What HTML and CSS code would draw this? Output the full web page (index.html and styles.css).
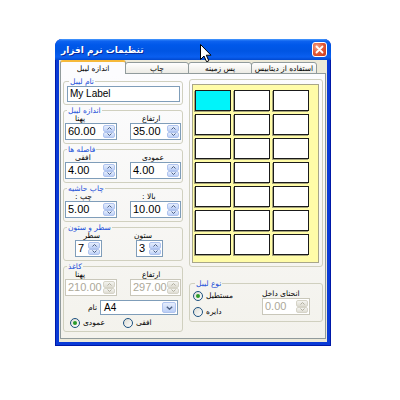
FILE: index.html
```html
<!DOCTYPE html>
<html>
<head>
<meta charset="utf-8">
<link rel="stylesheet" href="styles.css">
</head>
<body>
<div class="window">
  <div class="titlebar">
    <span class="title">تنظیمات نرم افزار</span>
    <span class="close"><svg width="9" height="9" viewBox="0 0 9 9"><path d="M1.5 1.5 L7.5 7.5 M7.5 1.5 L1.5 7.5" stroke="#fff" stroke-width="1.8" stroke-linecap="round"/></svg></span>
  </div>
  <div class="body">
    <div class="tabs">
      <div class="tab active t1">اندازه لیبل</div>
      <div class="tab t2">چاپ</div>
      <div class="tab t3">پس زمینه</div>
      <div class="tab t4">استفاده از دیتابیس</div>
    </div>
    <div class="panel">
      <div class="left">
        <fieldset class="g g1">
          <legend>نام لیبل</legend>
          <div class="textbox">My Label</div>
        </fieldset>
        <fieldset class="g">
          <legend>اندازه لیبل</legend>
          <div class="pair">
            <div class="field fl"><span class="lbl">پهنا</span><div class="spin w52"><span class="val">60.00</span><span class="btns"><i><svg viewBox="0 0 5 3"><path d="M0.5 2.5 L2.5 0.5 L4.5 2.5"/></svg></i><i><svg viewBox="0 0 5 3"><path d="M0.5 0.5 L2.5 2.5 L4.5 0.5"/></svg></i></span></div></div>
            <div class="field fr"><span class="lbl">ارتفاع</span><div class="spin w51"><span class="val">35.00</span><span class="btns"><i><svg viewBox="0 0 5 3"><path d="M0.5 2.5 L2.5 0.5 L4.5 2.5"/></svg></i><i><svg viewBox="0 0 5 3"><path d="M0.5 0.5 L2.5 2.5 L4.5 0.5"/></svg></i></span></div></div>
          </div>
        </fieldset>
        <fieldset class="g">
          <legend>فاصله ها</legend>
          <div class="pair">
            <div class="field fl"><span class="lbl">افقی</span><div class="spin w52"><span class="val">4.00</span><span class="btns"><i><svg viewBox="0 0 5 3"><path d="M0.5 2.5 L2.5 0.5 L4.5 2.5"/></svg></i><i><svg viewBox="0 0 5 3"><path d="M0.5 0.5 L2.5 2.5 L4.5 0.5"/></svg></i></span></div></div>
            <div class="field fr"><span class="lbl">عمودی</span><div class="spin w51"><span class="val">4.00</span><span class="btns"><i><svg viewBox="0 0 5 3"><path d="M0.5 2.5 L2.5 0.5 L4.5 2.5"/></svg></i><i><svg viewBox="0 0 5 3"><path d="M0.5 0.5 L2.5 2.5 L4.5 0.5"/></svg></i></span></div></div>
          </div>
        </fieldset>
        <fieldset class="g">
          <legend>چاپ حاشیه</legend>
          <div class="pair">
            <div class="field fl"><span class="lbl"><span dir="rtl">چپ :</span></span><div class="spin w52"><span class="val">5.00</span><span class="btns"><i><svg viewBox="0 0 5 3"><path d="M0.5 2.5 L2.5 0.5 L4.5 2.5"/></svg></i><i><svg viewBox="0 0 5 3"><path d="M0.5 0.5 L2.5 2.5 L4.5 0.5"/></svg></i></span></div></div>
            <div class="field fr"><span class="lbl"><span dir="rtl">بالا :</span></span><div class="spin w51"><span class="val">10.00</span><span class="btns"><i><svg viewBox="0 0 5 3"><path d="M0.5 2.5 L2.5 0.5 L4.5 2.5"/></svg></i><i><svg viewBox="0 0 5 3"><path d="M0.5 0.5 L2.5 2.5 L4.5 0.5"/></svg></i></span></div></div>
          </div>
        </fieldset>
        <fieldset class="g">
          <legend>سطر و ستون</legend>
          <div class="pair small">
            <div class="field sl"><span class="lbl">سطر</span><div class="spin w27"><span class="val">7</span><span class="btns"><i><svg viewBox="0 0 5 3"><path d="M0.5 2.5 L2.5 0.5 L4.5 2.5"/></svg></i><i><svg viewBox="0 0 5 3"><path d="M0.5 0.5 L2.5 2.5 L4.5 0.5"/></svg></i></span></div></div>
            <div class="field sr"><span class="lbl">ستون</span><div class="spin w27"><span class="val">3</span><span class="btns"><i><svg viewBox="0 0 5 3"><path d="M0.5 2.5 L2.5 0.5 L4.5 2.5"/></svg></i><i><svg viewBox="0 0 5 3"><path d="M0.5 0.5 L2.5 2.5 L4.5 0.5"/></svg></i></span></div></div>
          </div>
        </fieldset>
        <fieldset class="g g6">
          <legend>کاغذ</legend>
          <div class="pair">
            <div class="field fl"><span class="lbl">پهنا</span><div class="spin w52 dis"><span class="val">210.00</span><span class="btns"><i><svg viewBox="0 0 5 3"><path d="M0.5 2.5 L2.5 0.5 L4.5 2.5"/></svg></i><i><svg viewBox="0 0 5 3"><path d="M0.5 0.5 L2.5 2.5 L4.5 0.5"/></svg></i></span></div></div>
            <div class="field fr"><span class="lbl">ارتفاع</span><div class="spin w51 dis"><span class="val">297.00</span><span class="btns"><i><svg viewBox="0 0 5 3"><path d="M0.5 2.5 L2.5 0.5 L4.5 2.5"/></svg></i><i><svg viewBox="0 0 5 3"><path d="M0.5 0.5 L2.5 2.5 L4.5 0.5"/></svg></i></span></div></div>
          </div>
          <div class="comborow">
            <span class="clbl">نام</span>
            <div class="combo"><span class="val">A4</span><span class="drop"><svg viewBox="0 0 7 4"><path d="M0.8 0.8 L3.5 3.2 L6.2 0.8"/></svg></span></div>
          </div>
          <div class="radiorow">
            <span class="radio on"><i></i>عمودی</span>
            <span class="radio"><i></i>افقی</span>
          </div>
        </fieldset>
      </div>
      <div class="right">
        <div class="preview">
          <div class="yellow">
            <div class="grid">
              <div class="cell sel"></div><div class="cell"></div><div class="cell"></div>
              <div class="cell"></div><div class="cell"></div><div class="cell"></div>
              <div class="cell"></div><div class="cell"></div><div class="cell"></div>
              <div class="cell"></div><div class="cell"></div><div class="cell"></div>
              <div class="cell"></div><div class="cell"></div><div class="cell"></div>
              <div class="cell"></div><div class="cell"></div><div class="cell"></div>
              <div class="cell"></div><div class="cell"></div><div class="cell"></div>
            </div>
          </div>
        </div>
        <fieldset class="g shape">
          <legend>نوع لیبل</legend>
          <div class="shaperow">
            <div class="radios">
              <span class="radio on"><i></i>مستطیل</span>
              <span class="radio"><i></i>دایره</span>
            </div>
            <div class="field curve"><span class="lbl">انحنای داخل</span><div class="spin w48 dis"><span class="val">0.00</span><span class="btns"><i><svg viewBox="0 0 5 3"><path d="M0.5 2.5 L2.5 0.5 L4.5 2.5"/></svg></i><i><svg viewBox="0 0 5 3"><path d="M0.5 0.5 L2.5 2.5 L4.5 0.5"/></svg></i></span></div></div>
          </div>
        </fieldset>
      </div>
    </div>
  </div>
  <svg class="cursor" width="12" height="19" viewBox="0 0 12 19"><path d="M0.5 0.5 L0.5 15.5 L4 12 L6.6 17.8 L8.8 16.8 L6.3 11.2 L11 11.2 Z" fill="#fff" stroke="#000" stroke-width="1" stroke-linejoin="miter"/></svg>
</div>
</body>
</html>
```

FILE: styles.css
```css
* { box-sizing: border-box; }
body {
  margin: 0;
  background: #fff;
  font-family: "Liberation Sans", "DejaVu Sans", sans-serif;
  font-size: 9px;
  color: #000;
}
.window {
  position: relative;
  width: 276px;
  margin: 39px 0 0 55px;
  background: #0a3bd6;
  border: 1px solid #0019a8;
  border-top: none;
  border-radius: 7px 7px 0 0;
  padding: 0 3px 3px;
}
.titlebar {
  height: 21px;
  margin: 0 -4px;
  border-radius: 7px 7px 0 0;
  background: linear-gradient(to bottom, #4a9cff 0, #0e63f0 2px, #0058ea 6px, #0055e3 12px, #0a5ff0 18px, #0048d0 21px);
  display: flex;
  align-items: center;
  justify-content: space-between;
  padding: 0 4px 0 6px;
}
.title {
  color: #fff;
  font-family: "DejaVu Sans", sans-serif;
  font-weight: bold;
  font-size: 9px;
  text-shadow: 1px 1px 0 #0a2a9a;
}
.close {
  width: 15px;
  height: 15px;
  border: 1px solid #fff;
  border-radius: 3px;
  background: radial-gradient(circle at 30% 30%, #f4a690 0, #e45b38 45%, #c8391a 100%);
  display: flex;
  align-items: center;
  justify-content: center;
}
.close svg { display: block; }
.body {
  background: #ece9d8;
  height: 282px;
  padding: 0 1px 3px 1px;
}
.tabs {
  display: flex;
  align-items: flex-end;
  height: 14px;
  position: relative;
  z-index: 1;
}
.tab {
  height: 12px;
  border: 1px solid #919b9c;
  border-radius: 3px 3px 0 0;
  background: linear-gradient(#ffffff, #ecebe5);
  font-family: "DejaVu Sans", sans-serif;
  font-size: 7.5px;
  display: flex;
  align-items: center;
  justify-content: center;
  margin-left: -1px;
  white-space: nowrap;
}
.tab.active {
  height: 14px;
  background: #fcfcfe;
  border-bottom: none;
  border-top: 2px solid #f6b93a;
  margin-left: 0;
}
.t1 { width: 66px; }
.t2 { width: 64px; }
.t3 { width: 64px; }
.t4 { width: 66px; }
.panel {
  height: 266px;
  margin-top: -1px;
  border: 1px solid #919b9c;
  background: linear-gradient(#fcfcfe, #f3f2ec);
  display: flex;
  gap: 6px;
  padding: 3px 2px 0 2px;
}
.left {
  width: 120px;
  display: flex;
  flex-direction: column;
  gap: 1px;
}
.g {
  margin: 0;
  padding: 0 1px 3px 1px;
  border: 1px solid #d0d0bf;
  border-radius: 3px;
  min-width: 0;
  height: 38px;
}
.g legend {
  padding: 0 1px;
  margin-left: 2px;
  font-family: "DejaVu Sans", sans-serif;
  font-size: 7.5px;
  line-height: 9px;
  height: 9px;
  color: #1a4fd8;
}
.g1 { height: 28px; padding: 0 2px 2px 3px; }
.g6 { height: 70px; }
.textbox {
  height: 16px;
  border: 1px solid #7f9db9;
  background: #fff;
  font-size: 10px;
  line-height: 14px;
  padding-left: 2px;
}
.pair {
  display: flex;
  justify-content: space-between;
}
.field {
  display: flex;
  flex-direction: column;
}
.lbl {
  height: 8px;
  line-height: 8px;
  font-family: "DejaVu Sans", sans-serif;
  font-size: 7.5px;
  white-space: nowrap;
}
.fl .lbl { padding-left: 10px; }
.fr .lbl { padding-left: 12px; }
.small { padding: 0 18px 0 10px; }
.sl .lbl { text-align: right; padding-right: 2px; }
.sr .lbl { text-align: left; margin-left: -2px; }
.spin {
  height: 17px;
  border: 1px solid #7f9db9;
  background: #fff;
  display: flex;
  align-items: stretch;
}
.w52 { width: 52px; }
.w51 { width: 51px; }
.w48 { width: 48px; }
.w27 { width: 27px; }
.spin .val {
  flex: 1;
  font-size: 11px;
  line-height: 15px;
  padding-left: 2px;
  overflow: hidden;
}
.btns {
  width: 13px;
  display: flex;
  flex-direction: column;
  padding: 1px 1px 1px 0;
}
.btns i {
  flex: 1;
  display: flex;
  align-items: center;
  justify-content: center;
  background: linear-gradient(#e6eefc, #bccff7);
  border: 1px solid #b0c4ef;
  border-radius: 2px;
}
.btns svg {
  width: 5px;
  height: 3px;
  display: block;
}
.btns svg path {
  fill: none;
  stroke: #4d6185;
  stroke-width: 1;
}
.dis { border-color: #c9c7ba; }
.dis .val { color: #aca899; }
.dis .btns i { background: linear-gradient(#f4f4f0, #dedcd2); border-color: #d6d4c8; }
.dis .btns svg path { stroke: #b0ae9f; }
.comborow {
  display: flex;
  justify-content: flex-end;
  align-items: center;
  gap: 3px;
  margin-top: 4px;
  padding-right: 3px;
  height: 15px;
}
.clbl {
  font-family: "DejaVu Sans", sans-serif;
  font-size: 7.5px;
}
.combo {
  width: 78px;
  height: 15px;
  border: 1px solid #7f9db9;
  background: #fff;
  display: flex;
}
.combo .val {
  flex: 1;
  font-size: 10px;
  line-height: 13px;
  padding-left: 3px;
}
.drop {
  width: 14px;
  margin: 1px;
  border: 1px solid #b0c4ef;
  border-radius: 2px;
  background: linear-gradient(#e6eefc, #bccff7);
  display: flex;
  align-items: center;
  justify-content: center;
}
.drop svg { width: 7px; height: 4px; display: block; }
.drop svg path { fill: none; stroke: #4d6185; stroke-width: 1.4; }
.radiorow {
  display: flex;
  gap: 18px;
  padding-left: 5px;
  margin-top: 2px;
}
.radio {
  display: flex;
  align-items: center;
  gap: 3px;
  height: 11px;
  font-family: "DejaVu Sans", sans-serif;
  font-size: 7.5px;
  white-space: nowrap;
}
.radio i {
  width: 10px;
  height: 10px;
  border-radius: 50%;
  border: 1px solid #1c5180;
  background: linear-gradient(135deg, #dcdcd4, #ffffff);
  display: flex;
  align-items: center;
  justify-content: center;
}
.radio.on i::after {
  content: "";
  width: 4px;
  height: 4px;
  border-radius: 50%;
  background: #2a9a2a;
}
.right {
  width: 134px;
  display: flex;
  flex-direction: column;
}
.preview {
  margin-top: 2px;
  height: 188px;
  border: 1px solid #d0d0bf;
  border-radius: 3px;
  padding: 4px 3px 3px 2px;
}
.yellow {
  height: 100%;
  background: #fffca8;
  border: 1px solid #a8a68a;
  padding: 5px 0 0 2px;
}
.grid {
  display: grid;
  grid-template-columns: repeat(3, 36px);
  grid-auto-rows: 21px;
  column-gap: 3px;
  row-gap: 3px;
}
.cell {
  background: #fff;
  border: 1px solid #1a1a1a;
  box-shadow: -1px 1px 0 #a5a37c;
}
.cell.sel { background: #00f4fa; }
.shape {
  margin-top: 12px;
  height: 43px;
  padding: 0 1px 2px 3px;
}
.shaperow {
  display: flex;
  justify-content: space-between;
}
.radios {
  display: flex;
  flex-direction: column;
  gap: 5px;
  padding-top: 2px;
}
.curve {
  padding-top: 2px;
  margin-right: 11px;
}
.cursor {
  position: absolute;
  left: 144px;
  top: 5px;
}
```
